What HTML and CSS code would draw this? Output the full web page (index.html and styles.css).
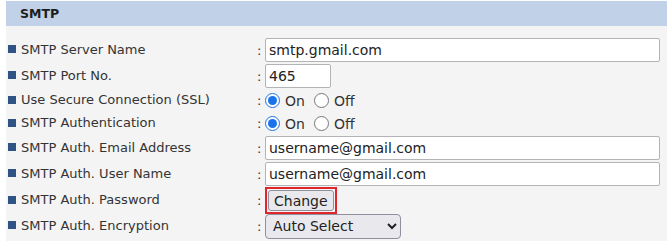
FILE: index.html
```html
<!DOCTYPE html>
<html lang="en">
<head>
  <meta charset="UTF-8">
  <title>SMTP Settings</title>
  <link rel="stylesheet" href="styles.css">
</head>
<body>

  <!-- SMTP panel -->
  <div class="panel">
    <div class="panel-head">SMTP</div>

    <div class="rows">
      <div class="row">
        <span class="label">SMTP Server Name</span>
        <span class="colon">:</span>
        <div class="field"><input type="text" class="text-long" value="smtp.gmail.com"></div>
      </div>

      <div class="row">
        <span class="label">SMTP Port No.</span>
        <span class="colon">:</span>
        <div class="field"><input type="text" class="text-short" value="465"></div>
      </div>

      <div class="row row-radio">
        <span class="label">Use Secure Connection (SSL)</span>
        <span class="colon">:</span>
        <div class="field">
          <label class="opt"><input type="radio" name="ssl" checked>On</label>
          <label class="opt"><input type="radio" name="ssl">Off</label>
        </div>
      </div>

      <div class="row row-radio">
        <span class="label">SMTP Authentication</span>
        <span class="colon">:</span>
        <div class="field">
          <label class="opt"><input type="radio" name="auth" checked>On</label>
          <label class="opt"><input type="radio" name="auth">Off</label>
        </div>
      </div>

      <div class="row">
        <span class="label">SMTP Auth. Email Address</span>
        <span class="colon">:</span>
        <div class="field"><input type="text" class="text-long" value="username@gmail.com"></div>
      </div>

      <div class="row">
        <span class="label">SMTP Auth. User Name</span>
        <span class="colon">:</span>
        <div class="field"><input type="text" class="text-long" value="username@gmail.com"></div>
      </div>

      <div class="row">
        <span class="label">SMTP Auth. Password</span>
        <span class="colon">:</span>
        <div class="field">
          <div class="highlight"><button type="button">Change</button></div>
        </div>
      </div>

      <div class="row">
        <span class="label">SMTP Auth. Encryption</span>
        <span class="colon">:</span>
        <div class="field">
          <select>
            <option>Auto Select</option>
            <option>SSL/TLS</option>
            <option>STARTTLS</option>
          </select>
        </div>
      </div>
    </div>
  </div>

</body>
</html>
```

FILE: styles.css
```css
* {
  margin: 0;
  padding: 0;
  box-sizing: border-box;
}

body {
  font-family: 'DejaVu Sans', Verdana, sans-serif;
  background: #fff;
  color: #333;
}

.panel {
  margin: 1px 0 0 6px;
  background: #f4f4f4;
  padding-bottom: 2px;
}

.panel-head {
  height: 25px;
  background: #c1d1e7;
  padding-left: 14px;
  display: flex;
  align-items: center;
  font-size: 12.5px;
  font-weight: bold;
  color: #1e1e1e;
}

.rows {
  padding: 11px 7px 0 2px;
}

.row {
  display: grid;
  grid-template-columns: 249px 8px 1fr;
  align-items: center;
  height: 26px;
}

.row-radio {
  height: 23px;
}

.label {
  display: flex;
  align-items: center;
  gap: 5px;
  font-size: 13px;
  color: #333;
  padding-bottom: 2px;
}

.label::before {
  content: "";
  width: 8px;
  height: 8px;
  background: #2f5382;
}

.colon {
  font-size: 13px;
  color: #333;
}

.field {
  display: flex;
  align-items: center;
}

input[type="text"] {
  height: 24px;
  border: 1px solid #b4b4b8;
  border-radius: 2px;
  background: #fff;
  padding: 0 3px;
  font-family: 'DejaVu Sans', sans-serif;
  font-size: 14px;
  color: #222;
}

.text-long {
  width: 100%;
}

.text-short {
  width: 66px;
}

.opt {
  display: flex;
  align-items: center;
  font-size: 14px;
  color: #333;
  margin-right: 9px;
}

.opt input[type="radio"] {
  width: 15px;
  height: 15px;
  margin: 0 5px 0 0;
  accent-color: #1a73e8;
}

.highlight {
  border: 2px solid #e0262b;
  padding: 1px;
  height: 27px;
  display: flex;
}

button {
  font-family: 'DejaVu Sans', sans-serif;
  font-size: 14px;
  color: #222;
  background: #e9e9ed;
  border: 1px solid #8f8f9d;
  border-radius: 3px;
  padding: 0 5px;
  height: 21px;
}

select {
  width: 136px;
  height: 25px;
  font-family: 'DejaVu Sans', sans-serif;
  font-size: 14px;
  color: #222;
  background: #e9e9ed;
  border: 1px solid #8f8f9d;
  border-radius: 4px;
  padding: 0 3px;
}
```
